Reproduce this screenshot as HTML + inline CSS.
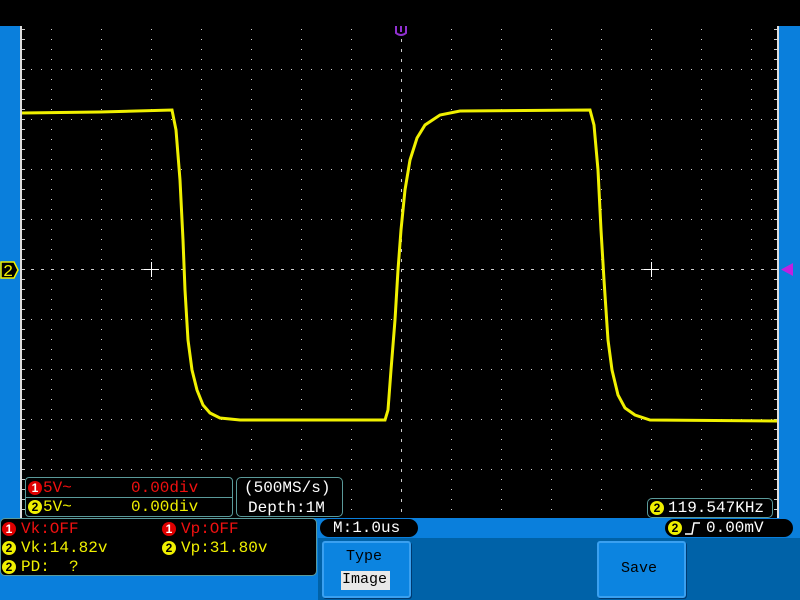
<!DOCTYPE html>
<html><head><meta charset="utf-8"><style>
*{margin:0;padding:0;box-sizing:border-box}
body{width:800px;height:600px;background:#000;position:relative;overflow:hidden;font-family:"Liberation Mono",monospace;font-size:16px}
.a{position:absolute}
.b{position:absolute;border-radius:50%;width:14px;height:14px;font:bold 12px "Liberation Sans",sans-serif;text-align:center;line-height:14px;color:#000}
.r{background:#e00000;color:#fff}.y{background:#f0f000}
.t{position:absolute;white-space:pre;line-height:18px}
.red{color:#f01010}.yel{color:#f0f000}.wh{color:#fff}
</style></head><body>
<div class="a" style="left:0;top:26px;width:20px;height:492px;background:#0a7fdc"></div>
<div class="a" style="left:20px;top:26px;width:2px;height:492px;background:#ddd"></div>
<div class="a" style="left:779px;top:26px;width:21px;height:492px;background:#0a7fdc"></div>
<div class="a" style="left:777px;top:26px;width:2px;height:492px;background:#ddd"></div>
<svg class="a" style="left:0;top:0" width="800" height="600">
<g fill="#ccc" id="g"></g>
<g stroke="#fff" stroke-width="1">
<line x1="144" y1="269.5" x2="159" y2="269.5"/><line x1="151.5" y1="262" x2="151.5" y2="277"/>
<line x1="644" y1="269.5" x2="659" y2="269.5"/><line x1="651.5" y1="262" x2="651.5" y2="277"/>
</g>
<polyline fill="none" stroke="#f0f000" stroke-width="3" points="22,113 100,112 172,110 176,130 180,180 183,240 185,290 188,340 192,370 197,390 203,405 210,413 220,418 240,420 385,420 388,410 391,370 395,320 398,270 401,230 405,190 410,160 417,138 425,125 440,115 460,111 590,110 594,125 598,170 601,230 604,280 608,340 612,370 618,395 625,408 635,415 650,420 777,421"/>
<path d="M396 26v7q5 4 10 0v-7M401 26v6" stroke="#9030d0" stroke-width="2" fill="none"/>
<polygon points="793,263 781,269.5 793,276" fill="#c020e0"/>
<polygon points="1,262 14,262 18,270 14,278 1,278" fill="#000" stroke="#f0f000" stroke-width="1.5"/>
<text x="3" y="276" fill="#f0f000" font-family="Liberation Mono" font-size="17">2</text>
</svg>
<script>
var g=document.getElementById('g'),s='';
for(var x=51;x<777;x+=50)for(var y=29;y<518;y+=10)s+='<rect x="'+x+'" y="'+y+'" width="1" height="1"/>';
for(var y=69;y<518;y+=50)for(var x=31;x<777;x+=10)s+='<rect x="'+x+'" y="'+y+'" width="1" height="1"/>';
for(var x=31;x<777;x+=10)s+='<rect x="'+x+'" y="269" width="3" height="1"/>';
for(var y=29;y<518;y+=10)s+='<rect x="401" y="'+y+'" width="1" height="3"/><rect x="22" y="'+y+'" width="3" height="1"/><rect x="774" y="'+y+'" width="3" height="1"/>';
g.innerHTML=s;
</script>
<div class="a" style="left:25px;top:477px;width:208px;height:40px;border:1px solid #5a9a9a;background:#000;border-radius:4px"></div>
<div class="a" style="left:25px;top:497px;width:208px;height:1px;background:#5a9a9a"></div>
<div class="b r" style="left:28px;top:481px">1</div><div class="t red" style="left:43px;top:479px">5V~</div><div class="t red" style="left:131px;top:479px">0.00div</div>
<div class="b y" style="left:28px;top:500px">2</div><div class="t yel" style="left:43px;top:498px">5V~</div><div class="t yel" style="left:131px;top:498px">0.00div</div>
<div class="a" style="left:236px;top:477px;width:107px;height:40px;border:1px solid #5a9a9a;border-radius:5px;background:#000"></div>
<div class="t wh" style="left:244px;top:479px">(500MS/s)</div><div class="t wh" style="left:248px;top:499px">Depth:1M</div>
<div class="a" style="left:647px;top:498px;width:126px;height:20px;border:1px solid #5a9a9a;border-radius:5px;background:#000"></div>
<div class="b y" style="left:650px;top:501px">2</div><div class="t wh" style="left:668px;top:499px">119.547KHz</div>
<div class="a" style="left:0;top:518px;width:800px;height:82px;background:#0a7fdc"></div>
<div class="a" style="left:318px;top:538px;width:482px;height:62px;background:#0062a8"></div>
<div class="a" style="left:0;top:518px;width:317px;height:58px;background:#000;border:1px solid #5a9a9a;border-radius:5px"></div>
<div class="b r" style="left:2px;top:522px">1</div><div class="t red" style="left:21px;top:520px">Vk:OFF</div>
<div class="b r" style="left:162px;top:522px">1</div><div class="t red" style="left:181px;top:520px">Vp:OFF</div>
<div class="b y" style="left:2px;top:541px">2</div><div class="t yel" style="left:21px;top:539px">Vk:14.82v</div>
<div class="b y" style="left:162px;top:541px">2</div><div class="t yel" style="left:181px;top:539px">Vp:31.80v</div>
<div class="b y" style="left:2px;top:560px">2</div><div class="t yel" style="left:21px;top:558px">PD:  ?</div>
<div class="a" style="left:320px;top:519px;width:98px;height:18px;background:#000;border-radius:9px"></div>
<div class="t wh" style="left:333px;top:519px">M:1.0us</div>
<div class="a" style="left:665px;top:519px;width:128px;height:18px;background:#000;border-radius:9px"></div>
<div class="b y" style="left:668px;top:521px">2</div>
<svg class="a" style="left:684px;top:520px" width="20" height="16"><path d="M1 14H8L10 3H16" stroke="#fff" stroke-width="1.5" fill="none"/></svg>
<div class="t wh" style="left:706px;top:519px">0.00mV</div>
<div class="a" style="left:322px;top:541px;width:89px;height:57px;background:#0c84e0;border:2px solid #3aa0f0;border-radius:3px;box-shadow:1px 1px 0 #003a70"></div>
<div class="t" style="left:346px;top:548px;color:#000;font-size:15px">Type</div>
<div class="a" style="left:341px;top:571px;width:49px;height:19px;background:#e8e8e8"></div>
<div class="t" style="left:342px;top:571px;color:#000;font-size:15px">Image</div>
<div class="a" style="left:597px;top:541px;width:89px;height:57px;background:#0c84e0;border:2px solid #3aa0f0;border-radius:3px;box-shadow:1px 1px 0 #003a70"></div>
<div class="t" style="left:621px;top:560px;color:#000;font-size:15px">Save</div>
</body></html>
